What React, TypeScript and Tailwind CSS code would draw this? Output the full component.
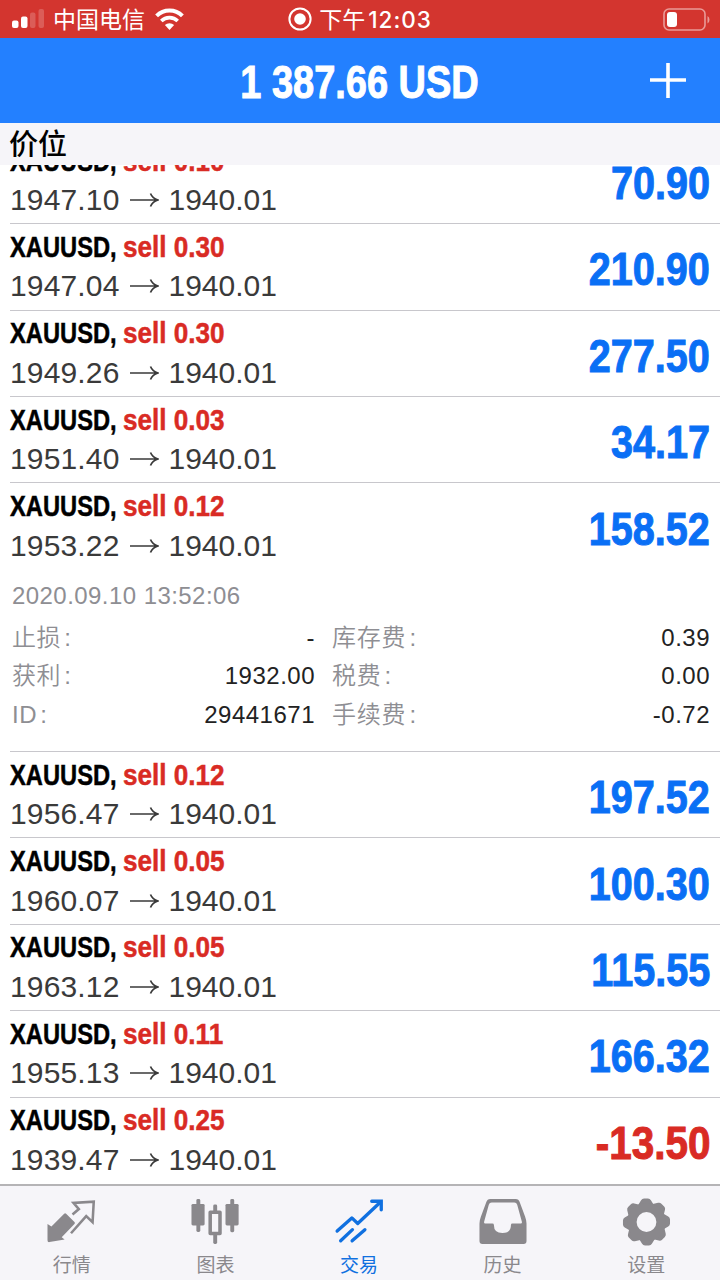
import type { ReactNode } from "react";

type Position = {
    lots: string;
    open: string;
    profit: string;
    expanded?: boolean;
};

const positions: Position[] = [
    { lots: "0.10", open: "1947.10", profit: "70.90" },
    { lots: "0.30", open: "1947.04", profit: "210.90" },
    { lots: "0.30", open: "1949.26", profit: "277.50" },
    { lots: "0.03", open: "1951.40", profit: "34.17" },
    { lots: "0.12", open: "1953.22", profit: "158.52", expanded: true },
    { lots: "0.12", open: "1956.47", profit: "197.52" },
    { lots: "0.05", open: "1960.07", profit: "100.30" },
    { lots: "0.05", open: "1963.12", profit: "115.55" },
    { lots: "0.11", open: "1955.13", profit: "166.32" },
    { lots: "0.25", open: "1939.47", profit: "-13.50" },
];

const details = [
    ["止损", "-", "库存费", "0.39"],
    ["获利", "1932.00", "税费", "0.00"],
    ["ID", "29441671", "手续费", "-0.72"],
];

function StatusBar() {
    return (
        <div className="h-[38px] shrink-0 bg-[#d3352f] text-white flex items-center justify-between pl-3 pr-[10px]">
            <div className="flex items-center w-[240px]">
                <svg width="33" height="20" viewBox="0 0 33 20" fill="#fff">
                    <rect x="0" y="11.5" width="6.5" height="7.5" rx="2" />
                    <rect x="9" y="7.5" width="6.5" height="11.5" rx="2" />
                    <rect x="18" y="3.5" width="5.5" height="15.5" rx="2" opacity=".2" />
                    <rect x="26.5" y="0" width="5.5" height="19" rx="2" opacity=".2" />
                </svg>
                <span className="ml-[8px] pt-[2px] text-[23px] leading-[36px] whitespace-nowrap">中国电信</span>
                <svg className="ml-[10px]" width="29" height="22" viewBox="0 0 29 22" fill="none" stroke="#fff">
                    <path d="M1.6 7.8a18.3 18.3 0 0 1 25.8 0" strokeWidth="4" />
                    <path d="M6.3 13a11.6 11.6 0 0 1 16.400 0" strokeWidth="3.6" />
                    <path d="M14.5 22l-4.6-4.900a6.500 6.500 0 0 1 9.200 0z" fill="#fff" stroke="none" />
                </svg>
            </div>
            <div className="flex items-center pr-[2px]">
                <svg width="24" height="24" viewBox="0 0 24 24">
                    <circle cx="12" cy="12" r="10.6" fill="none" stroke="#fff" strokeWidth="2" />
                    <circle cx="12" cy="12" r="5.8" fill="#fff" />
                </svg>
                <span className="ml-[7px] pt-[2px] text-[23px] leading-[36px] whitespace-nowrap">下午</span>
                <span className="ml-[3px] pt-[1px] font-['Inter'] font-medium text-[22.5px] tracking-[1px] leading-[37px]">12:03</span>
            </div>
            <div className="flex justify-end w-[240px]">
                <svg width="47" height="23" viewBox="0 0 47 23">
                    <rect x="1" y="1" width="41" height="21" rx="5" fill="none" stroke="#fff" strokeOpacity=".5" strokeWidth="1.6" />
                    <rect x="4" y="4" width="10" height="15" rx="3" fill="#fff" />
                    <path d="M44.5 8v7.5q2-1.2 2-3.8t-2-3.7z" fill="#fff" opacity=".5" />
                </svg>
            </div>
        </div>
    );
}

function Header() {
    return (
        <div className="h-[85px] shrink-0 bg-[#2380ff] flex items-center justify-between pl-[32px] pr-[34px] text-white">
            <div className="w-[36px]" />
            <div className="scale-x-[0.825] text-[46px] leading-[83px] font-bold whitespace-nowrap pt-[4px] [-webkit-text-stroke:1px]">1 387.66 USD</div>
            <svg width="36" height="36" viewBox="0 0 36 36" stroke="#fff" strokeWidth="3.6">
                <path d="M0 17h36M18 -1v36" />
            </svg>
        </div>
    );
}

function Details() {
    return (
        <div className="pl-[2px] pr-[10px] pt-[8px] text-[24px]">
            <div className="text-[#8e8e93] leading-[38px] tracking-[0.44px]">2020.09.10 13:52:06</div>
            <div className="pt-[4px]">
                {details.map(([label, value, label2, value2]) => (
                    <div key={label} className="flex h-[38.4px] leading-[38.4px]">
                        <div className="w-[303px] flex justify-between">
                            <span className="font-[350] tracking-[0.6px] text-[#8e8e93]">{label}<span className="ml-[3px]">:</span></span>
                            <span className="text-[#222] tracking-[0.5px]">{value}</span>
                        </div>
                        <div className="flex-1 ml-[17px] flex justify-between">
                            <span className="font-[350] tracking-[0.8px] text-[#8e8e93]">{label2}<span className="ml-[3px]">:</span></span>
                            <span className="text-[#222] tracking-[0.5px]">{value2}</span>
                        </div>
                    </div>
                ))}
            </div>
        </div>
    );
}

function Row({ p }: { p: Position }) {
    return (
        <div className={p.expanded ? "ml-[10px] h-[268.6px] border-b border-[#c8c7cc]" : "ml-[10px] h-[86.4px] border-b border-[#c8c7cc] last:border-transparent"}>
            <div className="h-[85.4px] flex items-center justify-between pr-[10px]">
                <div>
                    <div className="flex h-[38px] leading-[38px] text-[30px] font-bold whitespace-nowrap [-webkit-text-stroke:0.5px]">
                        <span className="w-[113.2px] origin-left scale-x-[0.79] text-black">XAUUSD,</span>
                        <span className="origin-left scale-x-[0.87] text-[#d92b24]">sell {p.lots}</span>
                    </div>
                    <div className="flex items-center h-[40px] text-[30px] leading-[40px] pt-[1px] text-[#3a3a3a]">
                        <span className="w-[108px] tracking-[0.15px]">{p.open}</span>
                        <svg className="ml-[11px] mr-[9.5px]" width="30" height="16" viewBox="0 0 30 16" fill="none" stroke="currentColor" strokeWidth="1.7">
                            <path d="M1 8h28M21.5 1.500q2 5 7.500 6.500-5.500 1.500-7.500 6.500" />
                        </svg>
                        <span>1940.01</span>
                    </div>
                </div>
                <div className={p.profit.startsWith("-")
                    ? "origin-right scale-x-[0.88] text-[46px] leading-[60px] pt-[5px] font-bold text-[#d92b24] [-webkit-text-stroke:1px]"
                    : "origin-right scale-x-[0.86] text-[46px] leading-[60px] pt-[5px] font-bold text-[#0a6ff5] [-webkit-text-stroke:1px]"}>
                    {p.profit}
                </div>
            </div>
            {p.expanded && <Details />}
        </div>
    );
}

function Tab({ label, active, children }: { label: string; active?: boolean; children: ReactNode }) {
    return (
        <div className={active ? "flex-1 flex flex-col items-center text-[#1070e0]" : "flex-1 flex flex-col items-center text-[#8a888c]"}>
            <svg className="mt-[12px]" width="50" height="50" viewBox="0 0 50 50">
                {children}
            </svg>
            <span className="text-[19px] leading-[28px] mt-[5px]">{label}</span>
        </div>
    );
}

function TabBar() {
    return (
        <div className="h-[96px] shrink-0 bg-[#f6f5f9] border-t-2 border-[#b5b4b6] flex pr-[2px]">
            <Tab label="行情">
                <path d="M0 26.5l4 2.500L17 16q1-1 2 0l8.500 8.500q1 1 0 2L14.500 40l3 2.300L2 45q-2 .3-2-2z" fill="currentColor" />
                <path d="M25.5 16.800l6.500-5.500-5.500-6.300 20.700-1.300-1.200 21-6.500-6.200L24 36" fill="none" stroke="currentColor" strokeWidth="2.6" />
            </Tab>
            <Tab label="图表">
                <g fill="currentColor">
                    <rect x="6" y="1" width="4" height="33.7" rx="1.5" />
                    <rect x="1" y="6" width="13.4" height="22" rx="1.5" />
                    <rect x="40.6" y="1" width="4" height="34" rx="1.5" />
                    <rect x="35.7" y="6" width="13.4" height="22" rx="1.5" />
                    <rect x="23.2" y="6.7" width="4" height="8" rx="1.5" />
                    <rect x="23.2" y="36" width="4" height="11" rx="1.5" />
                </g>
                <rect x="20.1" y="14.5" width="10" height="21.8" fill="none" stroke="currentColor" strokeWidth="3.6" strokeLinejoin="round" />
            </Tab>
            <Tab label="交易" active>
                <g fill="none" stroke="currentColor" strokeWidth="3.4" strokeLinecap="round" strokeLinejoin="round">
                    <path d="M2.7 33.7L17.7 20.3l6 5.7L47 4" />
                    <path d="M38 3.3h9.7V12" strokeLinejoin="miter" />
                    <path d="M6.3 43.7l12-11.4M18 43.7l13-11.4" />
                </g>
            </Tab>
            <Tab label="历史">
                <path
                    fillRule="evenodd"
                    fill="currentColor"
                    d="M12 1h26q3 0 4 3l5.500 15q1.500 4 1.500 7v18q0 3-3 3H4q-3 0-3-3V26q0-3 1.500-7L8 4q1-3 4-3zM13.500 4.700q-2.300 0-3 2.300L5.800 24q-.5 2 1 2h7.400q1.500 0 1.500 1.500 0 8.200 8.700 8.200t8.700-8.200q0-1.500 1.500-1.500h8.600q1.500 0 1-2L39.500 7q-.7-2.300-3-2.300z"
                />
            </Tab>
            <Tab label="设置">
                <g fill="currentColor">
                    {[0, 45, 90, 135, 180, 225, 270, 315].map((a) => (
                        <path key={a} d="M16.5 8L20 2.300q1-1.800 3-1.800h4q2 0 3 1.800l3.500 5.700z" transform={`rotate(${a} 25.5 24.5)`} />
                    ))}
                </g>
                <circle cx="25.5" cy="24.5" r="14.8" fill="none" stroke="currentColor" strokeWidth="9.4" />
            </Tab>
        </div>
    );
}

export default function App() {
    return (
        <div className="w-[720px] h-[1280px] flex flex-col overflow-hidden bg-white font-['Liberation_Sans','Noto_Sans_CJK_SC',sans-serif]">
            <StatusBar />
            <Header />
            <div className="h-[42px] shrink-0 bg-[#f6f5f9] pl-[9px] pt-[2px] text-[29px] leading-[40px] font-medium text-black">价位</div>
            <div className="h-[1019px] shrink-0 overflow-hidden">
                <div className="-mt-[27.2px]">
                    {positions.map((p) => (
                        <Row key={p.open} p={p} />
                    ))}
                </div>
            </div>
            <TabBar />
        </div>
    );
}
